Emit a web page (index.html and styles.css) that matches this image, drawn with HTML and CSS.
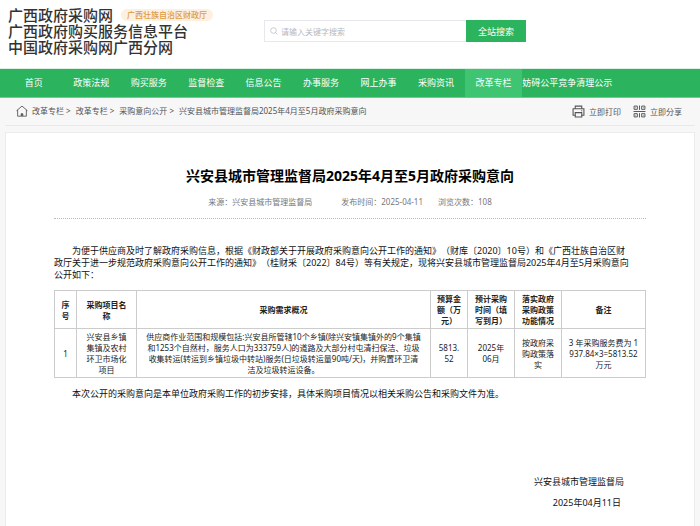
FILE: index.html
```html
<!DOCTYPE html>
<html lang="zh-CN">
<head>
    <meta charset="UTF-8">
    <meta name="viewport" content="width=device-width, initial-scale=1.0">
    <title>广西政府采购网</title>
    <link rel="stylesheet" href="styles.css">
</head>
<body>
    <header class="header">
        <div class="logo">
            <div class="logo-row">广西政府采购网<span class="badge">广西壮族自治区财政厅</span></div>
            <div class="logo-row">广西政府购买服务信息平台</div>
            <div class="logo-row">中国政府采购网广西分网</div>
        </div>
        <form class="search">
            <label class="search-box">
                <svg class="search-icon" viewBox="0 0 16 16" fill="none" stroke="currentColor" stroke-width="1.4">
                    <circle cx="7" cy="7" r="5.6"/>
                    <path d="M11 11l4 4"/>
                </svg>
                <input type="text" placeholder="请输入关键字搜索" aria-label="请输入关键字搜索">
            </label>
            <button type="button">全站搜索</button>
        </form>
    </header>

    <nav class="nav">
        <a href="#">首页</a>
        <a href="#">政策法规</a>
        <a href="#">购买服务</a>
        <a href="#">监督检查</a>
        <a href="#">信息公告</a>
        <a href="#">办事服务</a>
        <a href="#">网上办事</a>
        <a href="#">采购资讯</a>
        <a href="#" class="active">改革专栏</a>
        <a href="#" class="long">妨碍公平竞争清理公示</a>
    </nav>

    <div class="toolbar">
        <div class="crumbs">
            <svg class="home-icon" viewBox="0 0 22 22" fill="none" stroke="currentColor" stroke-width="1.6">
                <path d="M1 10.5L11 2l10 8.5M3 9v11.5h16V9"/>
                <path d="M9.5 20v-4h3v4" fill="currentColor"/>
            </svg>
            <a href="#">改革专栏 &gt;</a>
            <a href="#">改革专栏 &gt;</a>
            <a href="#">采购意向公开 &gt;</a>
            <span>兴安县城市管理监督局2025年4月至5月政府采购意向</span>
        </div>
        <div class="tools">
            <button type="button">
                <svg viewBox="0 0 24 24" fill="none" stroke="currentColor" stroke-width="2">
                    <path d="M6 7V2h12v5M6 19H2V7h20v12h-4"/>
                    <path d="M6 14h12v8H6zM17 10.5h2"/>
                </svg>
                立即打印
            </button>
            <button type="button">
                <svg viewBox="0 0 24 24" fill="none" stroke="currentColor" stroke-width="1.8">
                    <path d="M2 2h6v6H2zM16 2h6v6h-6zM2 16h6v6H2zM16 16h6v6h-6z"/>
                    <path d="M12 1v8M12 15v8M1 12h22M4.5 5h1M18.5 5h1M4.5 19h1M18.5 19h1"/>
                </svg>
                立即分享
            </button>
        </div>
    </div>

    <main class="article">
        <h1>兴安县城市管理监督局2025年4月至5月政府采购意向</h1>
        <div class="meta">
            <span class="source">来源：兴安县城市管理监督局</span>
            <span>发布时间：2025-04-11</span>
            <span>浏览次数：108</span>
        </div>

        <p class="indent">为便于供应商及时了解政府采购信息，根据《财政部关于开展政府采购意向公开工作的通知》（财库〔2020〕10号）和《广西壮族自治区财<br>政厅关于进一步规范政府采购意向公开工作的通知》（桂财采〔2022〕84号）等有关规定，现将兴安县城市管理监督局2025年4月至5月采购意向<br>公开如下：</p>

        <table>
            <colgroup>
                <col class="col-no">
                <col class="col-name">
                <col class="col-desc">
                <col class="col-money">
                <col class="col-time">
                <col class="col-policy">
                <col class="col-note">
            </colgroup>
            <thead>
                <tr>
                    <th>序<br>号</th>
                    <th>采购项目名<br>称</th>
                    <th>采购需求概况</th>
                    <th>预算金<br>额（万<br>元）</th>
                    <th>预计采购<br>时间（填<br>写到月）</th>
                    <th>落实政府<br>采购政策<br>功能情况</th>
                    <th>备注</th>
                </tr>
            </thead>
            <tbody>
                <tr>
                    <td>1</td>
                    <td>兴安县乡镇<br>集镇及农村<br>环卫市场化<br>项目</td>
                    <td>供应商作业范围和规模包括:兴安县所管辖10个乡镇(除兴安镇集镇外的9个集镇<br>和1253个自然村，服务人口为333759人)的道路及大部分村屯清扫保洁、垃圾<br>收集转运(转运到乡镇垃圾中转站)服务(日垃圾转运量90吨/天)，并购置环卫清<br>洁及垃圾转运设备。</td>
                    <td>5813.<br>52</td>
                    <td>2025年<br>06月</td>
                    <td>按政府采<br>购政策落<br>实</td>
                    <td>3 年采购服务费为 1<br>937.84×3=5813.52<br>万元</td>
                </tr>
            </tbody>
        </table>

        <p class="indent">本次公开的采购意向是本单位政府采购工作的初步安排，具体采购项目情况以相关采购公告和采购文件为准。</p>

        <div class="sign">
            <p>兴安县城市管理监督局</p>
            <p class="date">2025年04月11日</p>
        </div>
    </main>
</body>
</html>
```
FILE: styles.css
```css
* {
    box-sizing: border-box;
}

body {
    margin: 0;
    min-height: 100vh;
    display: flex;
    flex-direction: column;
    background-color: #f7f7f7;
    font-family: "Noto Sans", "Noto Sans CJK SC", sans-serif;
    font-size: 9px;
    line-height: 12px;
    color: #111;
    text-spacing-trim: space-all;
    overflow-x: hidden;
}

a {
    color: inherit;
    text-decoration: none;
}

button,
input {
    border: none;
    padding: 0;
    background: none;
    font-family: inherit;
    color: inherit;
}

button {
    cursor: pointer;
}

p {
    margin: 0;
    white-space: nowrap;
}

/* Header */
.header {
    display: flex;
    align-items: flex-start;
    padding: 7px 8px 13px;
    background-color: #fff;
    border-bottom: 1px solid #dcefe3;
}

.logo {
    width: 256px;
    font-size: 15px;
    font-weight: 500;
    line-height: 16px;
    font-family: "Noto Sans CJK SC", sans-serif;
    color: #333;
}

.logo-row {
    display: flex;
    align-items: center;
    height: 16px;
    white-space: nowrap;
}

.badge {
    margin-left: 8px;
    padding: 0 6px;
    border-radius: 6px;
    background-color: #fdf0df;
    color: #dd9a45;
    font-size: 8px;
    line-height: 12px;
}

.search {
    display: flex;
    flex: 0 1 262px;
    height: 22px;
    margin-top: 13px;
}

.search-box {
    display: flex;
    flex: 1;
    align-items: center;
    gap: 3px;
    padding-left: 5px;
    border: 1px solid #e6e8ee;
    border-right: none;
    color: #b4b8c0;
}

.search-icon {
    width: 8px;
    height: 8px;
}

.search-box input {
    flex: 1;
    min-width: 0;
    font-size: 8px;
    outline: none;
}

.search-box input::placeholder {
    color: #b4b8c0;
}

.search button {
    width: 60px;
    background-color: #2bb35e;
    color: #fff;
    font-size: 9px;
}

/* Main menu */
.nav {
    display: flex;
    height: 29px;
    padding: 0 5px;
    background-color: #2bb35e;
    border-bottom: 1px solid #6fcb90;
    color: #fff;
    line-height: 28px;
    text-align: center;
    white-space: nowrap;
}

.nav a {
    flex: 0 0 8.33%;
}

.nav .active {
    background-color: #3fc571;
}

.nav .long {
    text-align: left;
}

/* Breadcrumbs and page tools */
.toolbar {
    display: flex;
    justify-content: space-between;
    align-items: center;
    height: 28px;
    margin: 0 5px;
    padding: 0 13px 1px 11px;
    border-bottom: 1px solid #e9e9e9;
    color: #555;
    font-size: 8px;
    white-space: nowrap;
}

.crumbs,
.tools {
    display: flex;
    align-items: center;
}

.crumbs {
    gap: 5px;
}

.home-icon {
    width: 12px;
    height: 12px;
    margin-right: -1px;
}

.tools {
    gap: 12px;
}

.tools button {
    display: flex;
    align-items: center;
    gap: 4px;
    font-size: 8px;
}

.tools svg {
    width: 13px;
    height: 13px;
}

/* Article */
.article {
    flex: 1;
    margin: 6px 5px 0;
    padding: 32px 48px 16px;
    background-color: #fff;
    border: 1px solid #ececec;
    border-bottom: none;
}

h1 {
    margin: 0;
    font-size: 14px;
    line-height: 22px;
    text-align: center;
    color: #000;
}

.meta {
    display: flex;
    justify-content: center;
    gap: 15px;
    padding: 9px 0 10px;
    margin-bottom: 26px;
    border-bottom: 1px dotted #bbb;
    color: #777;
    font-size: 8px;
}

.source {
    margin-right: 14px;
}

.indent {
    text-indent: 2em;
}

table {
    width: 100%;
    margin: 9px 0 10px;
    table-layout: fixed;
    border-collapse: collapse;
    font-size: 8px;
    line-height: 11px;
    text-align: center;
    color: #222;
}

th,
td {
    padding: 2px 0;
    border: 1px solid #ccc;
    white-space: nowrap;
}

.col-no { width: 22px; }
.col-name { width: 60px; }
.col-money { width: 37px; }
.col-time { width: 47px; }
.col-policy { width: 47px; }
.col-note { width: 84px; }

.sign {
    padding: 76px 22px 0 0;
    text-align: right;
}

.sign .date {
    padding: 9px 3px 0 0;
}
```
